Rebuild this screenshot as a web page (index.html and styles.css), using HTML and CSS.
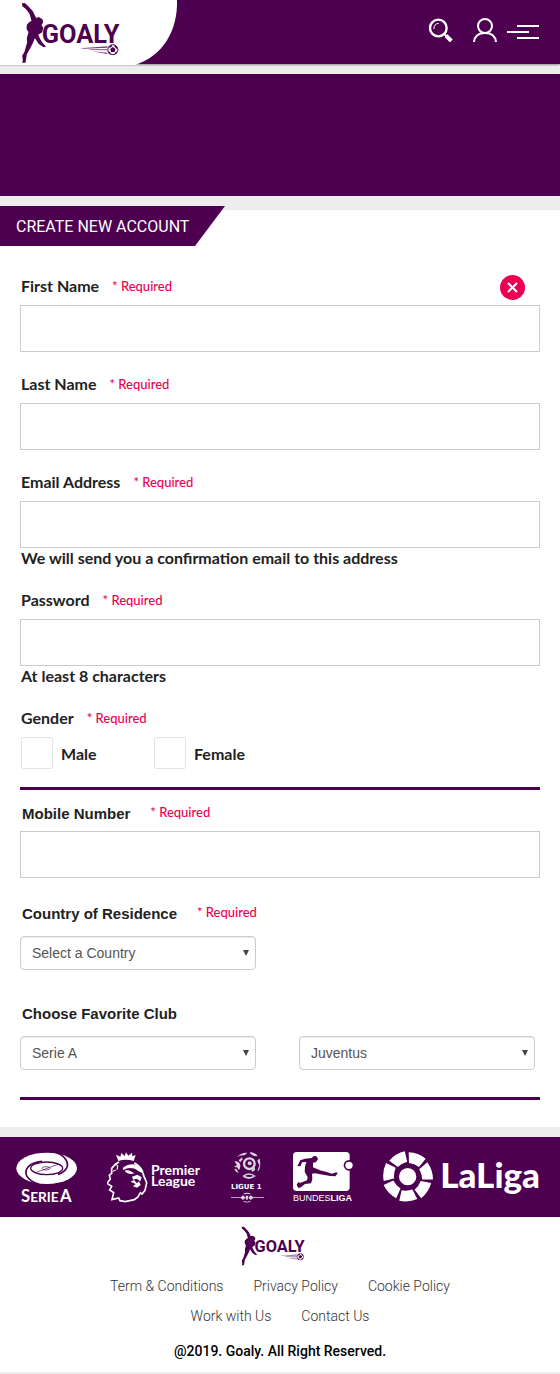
FILE: index.html
```html
<!DOCTYPE html>
<html lang="en">
<head>
<meta charset="utf-8">
<meta name="viewport" content="width=device-width, initial-scale=1">
<title>Goaly – Create new account</title>
<link rel="stylesheet" href="styles.css">
</head>
<body>
<svg class="sprite" aria-hidden="true">
  <symbol id="goaly" viewBox="63 5 305 186">
    <path d="M66 8L75 9L86 19L98 33L108 53L116 50L127 57L129 66L124 74L129 82L126 96L114 103L120 116L127 127L138 139L129 140L115 130L104 113L100 124L91 142L80 162L76 187L66 187L68 180L66 166L73 154L81 126L80 113L85 96L79 85L80 73L87 66L94 61L88 40L77 26L66 17Z"/>
    <text class="wordmark" x="125" y="127">GOALY</text>
    <path d="M240 144L322 138V142L252 145ZM262 147H322V150L275 149ZM275 153L322 157V161L300 157Z" opacity=".75"/>
    <circle cx="338" cy="148" r="15" fill="#fff" stroke="currentColor" stroke-width="3"/>
    <path d="M338 140L346 146L343 155H333L330 146ZM326 139L333 134L337 137L329 143ZM343 134L351 140L350 146L343 139ZM324 153L330 156L332 163L325 159ZM346 156L352 153L349 160L342 163Z"/>
  </symbol>
</svg>

<header class="topbar">
  <a class="brand" href="#" aria-label="Goaly home">
    <svg class="brand-shape" viewBox="0 0 178 65" aria-hidden="true"><path d="M0 0H177C178 30 163 56 135 65H0Z" fill="#fff"/></svg>
    <svg class="brand-logo" aria-hidden="true"><use href="#goaly"/></svg>
  </a>
  <nav class="tools" aria-label="Main">
    <button class="tool" type="button" aria-label="Search">
      <svg width="24" height="24" viewBox="0 0 72 72" fill="none" stroke="#fff"><circle cx="28" cy="30" r="25" stroke-width="7"/><path d="M15 33C14 23 20 16 29 16" stroke-width="3"/><path d="M46 48L52 54" stroke-width="6"/><path d="M51 53L67 69" stroke-width="12"/></svg>
    </button>
    <button class="tool" type="button" aria-label="Account">
      <svg width="24" height="24" viewBox="0 0 72 72" fill="none" stroke="#fff" stroke-width="6"><circle cx="36" cy="24" r="21"/><path d="M3 72C5 53 18 45 36 45S67 53 69 72"/></svg>
    </button>
    <button class="tool" type="button" aria-label="Menu">
      <svg width="32" height="24" viewBox="0 0 96 72" fill="#fff"><path d="M30 21H96V27H30ZM0 39H66V45H0ZM30 57H96V63H30Z"/></svg>
    </button>
  </nav>
</header>

<div class="banner"></div>

<main class="panel">
  <h1 class="tab">CREATE NEW ACCOUNT</h1>
  <form class="form">
    <section class="group">
      <div class="field">
        <div class="caption">
          <label for="first">First Name</label><span class="required">* Required</span>
          <button class="clear" type="button" aria-label="Clear first name">
            <svg width="11" height="11" viewBox="0 0 11 11" stroke="#fff" stroke-width="2"><path d="M1 1L10 10M10 1L1 10"/></svg>
          </button>
        </div>
        <input class="box" id="first" type="text">
      </div>
      <div class="field">
        <div class="caption"><label for="last">Last Name</label><span class="required">* Required</span></div>
        <input class="box" id="last" type="text">
      </div>
      <div class="field">
        <div class="caption"><label for="email">Email Address</label><span class="required">* Required</span></div>
        <input class="box" id="email" type="email" aria-describedby="email-hint">
        <p class="hint" id="email-hint">We will send you a confirmation email to this address</p>
      </div>
      <div class="field">
        <div class="caption"><label for="password">Password</label><span class="required">* Required</span></div>
        <input class="box" id="password" type="password" aria-describedby="password-hint">
        <p class="hint" id="password-hint">At least 8 characters</p>
      </div>
      <div class="field" role="group" aria-labelledby="gender">
        <div class="caption"><span id="gender">Gender</span><span class="required">* Required</span></div>
        <div class="choices">
          <label class="choice"><input type="checkbox" name="male">Male</label>
          <label class="choice"><input type="checkbox" name="female">Female</label>
        </div>
      </div>
    </section>

    <section class="group details">
      <div class="field">
        <div class="caption"><label for="mobile">Mobile Number</label><span class="required">* Required</span></div>
        <input class="box" id="mobile" type="tel">
      </div>
      <div class="field picker">
        <div class="caption"><label for="country">Country of Residence</label><span class="required">* Required</span></div>
        <div class="selects"><select id="country"><option>Select a Country</option></select></div>
      </div>
      <div class="field picker">
        <div class="caption"><label for="league">Choose Favorite Club</label></div>
        <div class="selects">
          <select id="league"><option>Serie A</option></select>
          <select id="club" aria-label="Club"><option>Juventus</option></select>
        </div>
      </div>
    </section>
  </form>
</main>

<section class="leagues" aria-label="Leagues">
  <svg width="61" height="80" viewBox="48 51 183 240" fill="#fff">
    <ellipse cx="140" cy="145" rx="91" ry="47"/>
    <g fill="none" stroke="#4d0050">
      <ellipse cx="140" cy="145" rx="48" ry="19" stroke-width="4"/>
      <path d="M166 97C198 108 213 133 194 152C188 158 181 161 174 163" stroke-width="5"/>
      <path d="M116 192C82 183 67 158 86 139C94 130 108 126 126 124" stroke-width="5"/>
      <ellipse cx="138" cy="145" rx="12" ry="5" stroke-width="2"/>
      <path d="M109 157L174 133M96 151L108 158M170 130L184 139" stroke-width="2"/>
    </g>
    <text class="lato" x="63" y="245" font-size="50">S<tspan font-size="41">ERIE</tspan><tspan font-size="50" dx="4">A</tspan></text>
  </svg>
  <svg width="94" height="80" viewBox="321 51 282 240" fill="#fff">
    <path d="M355 123L348 104L361 110L364 99L374 108L378 97L385 107L396 98L397 109L407 105L401 123Q378 115 355 123Z"/>
    <path d="M403 129C413 135 421 140 426 151L432 169L440 188L435 211L426 222L421 218L414 231L403 239L376 245L360 242L356 234L336 239L341 218L329 210L335 199L321 190L331 177L328 166L335 160L335 145L347 132L357 126" fill="none" stroke="#fff" stroke-width="5"/>
    <path d="M368 144C379 134 393 130 408 134C420 140 427 151 428 160L416 154L405 146C391 142 379 143 371 151ZM374 152C386 148 393 154 403 160C392 164 381 162 374 152ZM396 170L412 164L425 172L421 184L410 176L399 179ZM392 185L402 180L411 190L417 184L422 195L411 203L399 199L407 192Z"/>
    <path d="M350 133Q356 139 351 149M338 154L348 150" stroke="#fff" stroke-width="3"/>
    <text class="lato" font-size="42"><tspan x="453" y="164">Premier</tspan><tspan x="453" y="199">League</tspan></text>
  </svg>
  <svg width="33" height="80" viewBox="63 21 99 240" fill="#ddd3e0">
    <circle cx="118" cy="101" r="16" fill="none" stroke="#ddd3e0" stroke-width="7"/><circle cx="119" cy="100" r="6"/>
    <path d="M80 82Q92 67 112 68L104 76Q89 75 80 82ZM119 66Q137 68 143 79L132 78L122 72ZM73 94Q83 92 90 101Q93 112 87 121L81 112L72 111L81 105ZM72 116L80 118L86 128L79 126ZM148 85Q154 104 147 121L142 124L148 106L142 92ZM97 138Q117 122 137 138Q127 147 116 147Q105 147 97 138ZM124 120L135 111L135 120L127 126ZM86 91L96 82L98 88L91 97Z"/>
    <path d="M105 138Q117 130 130 138Q118 144 105 138Z" fill="#4d0050"/>
    <text class="dejavu" x="63" y="176" font-size="21" fill="#fff">LIGUE 1</text>
    <path d="M63 202H92L99 196L107 203L99 210L92 204H63ZM162 202H130L122 196L115 203L122 210L130 204H162ZM99 192Q111 185 123 192L119 193Q111 189 103 193ZM99 214Q111 221 123 214L119 213Q111 217 103 213ZM107 197H115L113 209H108Z"/>
  </svg>
  <svg width="60" height="80" viewBox="249 21 180 240" fill="#fff">
    <rect x="249" y="66" width="170" height="117" rx="11"/>
    <circle cx="417" cy="106" r="16" fill="#4d0050"/><circle cx="417" cy="106" r="11"/>
    <path fill="#4d0050" d="M308 80Q314 76 321 80L324 88L317 97L309 98L309 112L330 121L350 126L365 131L379 127L383 130L376 139L361 138L340 134L315 130L306 131L307 148L303 160L285 162L273 172L265 174L260 164L265 156L270 159L278 156L291 151L293 142L284 125L285 110L289 96L276 97L272 108L262 109L271 91L285 86L306 84Z"/>
    <text class="arial" x="249" y="214" font-size="27">BUNDES<tspan class="bold">LIGA</tspan></text>
  </svg>
  <svg width="161" height="80" viewBox="39 21 483 240" fill="#fff">
    <defs><path id="block" d="M3 -73Q32 -72 54 -54L34 -29Q20 -39 4 -41Z"/></defs>
    <g transform="translate(113 140)">
      <circle r="26"/>
      <use href="#block"/>
      <use href="#block" transform="rotate(51.43)"/>
      <use href="#block" transform="rotate(102.86)"/>
      <use href="#block" transform="rotate(154.29)"/>
      <use href="#block" transform="rotate(205.71)"/>
      <use href="#block" transform="rotate(257.14)"/>
      <use href="#block" transform="rotate(308.57)"/>
    </g>
    <text class="lato heavy" x="211" y="173" font-size="105">LaLiga</text>
  </svg>
</section>

<footer class="footer">
  <a class="footer-brand" href="#" aria-label="Goaly home"><svg class="footer-logo" aria-hidden="true"><use href="#goaly"/></svg></a>
  <nav class="links" aria-label="Footer">
    <a href="#">Term &amp; Conditions</a>
    <a href="#">Privacy Policy</a>
    <a href="#">Cookie Policy</a>
    <a href="#">Work with Us</a>
    <a href="#">Contact Us</a>
  </nav>
  <p class="copyright">@2019. Goaly. All Right Reserved.</p>
</footer>
</body>
</html>
```
FILE: styles.css
```css
:root {
  --plum: #4d0050;
  --pink: #e90052;
  --mist: #ededed;
}

* { box-sizing: border-box; }

body {
  margin: 0;
  background: var(--mist);
  color: #222;
  font-family: Lato, sans-serif;
}

button { padding: 0; border: 0; background: none; cursor: pointer; }

.sprite { position: absolute; width: 0; height: 0; }

.wordmark { font: 700 76px Roboto, sans-serif; }

.topbar {
  display: flex;
  justify-content: space-between;
  height: 64px;
  margin-bottom: 10px;
  background: var(--plum);
  box-shadow: 0 1px 2px rgba(0, 0, 0, .4);
}

.brand { position: relative; width: 178px; color: var(--plum); }
.brand-shape { display: block; width: 178px; height: 65px; }
.brand-logo { position: absolute; left: 21px; top: 2px; width: 102px; height: 62px; fill: currentColor; }

.tools { display: flex; align-items: center; padding: 0 21px 4px 0; }
.tool { display: flex; margin-left: 20px; }
.tool:last-child { margin-left: 10px; }

.banner { height: 122px; margin-bottom: 10px; background: var(--plum); }

.panel {
  padding-bottom: 27px;
  background: linear-gradient(var(--mist) 4px, #fff 4px);
}

.tab {
  width: 225px;
  height: 40px;
  margin: 0;
  padding-left: 16px;
  background: var(--plum);
  clip-path: polygon(0 0, 100% 0, 195px 100%, 0 100%);
  color: #fff;
  font: 400 16px/42px Roboto, sans-serif;
}

.form { padding: 30px 20px 0; }

.group { border-bottom: 3px solid var(--plum); padding-bottom: 18px; }
.field + .field { margin-top: 22px; }

.caption {
  display: flex;
  align-items: center;
  gap: 13px;
  height: 20px;
  margin-bottom: 9px;
  padding-left: 1px;
  font-size: 16px;
  font-weight: 700;
  line-height: 20px;
}

.required { color: var(--pink); font-size: 13px; font-weight: 500; }

.clear {
  display: grid;
  place-items: center;
  width: 25px;
  height: 25px;
  margin: 2px 15px 0 auto;
  border-radius: 50%;
  background: var(--pink);
}

.box {
  display: block;
  width: 100%;
  height: 47px;
  padding: 0 12px;
  border: 1px solid #ccc;
  background: #fff;
  font: 400 15px Lato, sans-serif;
}

.hint { margin: 0; padding-left: 1px; font-size: 16px; font-weight: 700; line-height: 20px; }

.choices { display: flex; padding-left: 1px; }
.choice { display: flex; align-items: center; gap: 8px; width: 133px; font-size: 16px; font-weight: 700; }
.choice input {
  appearance: none;
  width: 32px;
  height: 32px;
  margin: 0;
  border: 1px solid #e4e4e4;
  border-radius: 2px;
  background: #fff;
}

.details { padding: 14px 0 27px; }
.details .caption {
  gap: 20px;
  margin-bottom: 7px;
  padding-left: 2px;
  font-family: "Liberation Sans", Arial, sans-serif;
  font-size: 15px;
}
.details .required { padding-bottom: 4px; font-family: Lato, sans-serif; }
.details .picker .caption { margin-bottom: 12px; }
.details .field + .picker { margin-top: 26px; }
.details .picker + .picker { margin-top: 34px; }

.selects { display: flex; gap: 43px; }
.selects select {
  appearance: none;
  width: 236px;
  min-width: 0;
  height: 34px;
  padding: 0 24px 0 11px;
  border: 1px solid #ccc;
  border-radius: 4px;
  background: #fff url("data:image/svg+xml,%3Csvg xmlns='http://www.w3.org/2000/svg' width='6' height='6'%3E%3Cpath d='M0 0h6L3 6z' fill='%23444'/%3E%3C/svg%3E") no-repeat right 6px center;
  box-shadow: inset 0 1px 1px rgba(0, 0, 0, .08);
  color: #555;
  font: 400 14px "Liberation Sans", Arial, sans-serif;
}

.leagues {
  display: flex;
  justify-content: space-between;
  margin-top: 10px;
  padding: 0 16px;
  background: var(--plum);
}
.lato { font-family: Lato, sans-serif; font-weight: 700; }
.heavy { font-weight: 900; }
.arial { font-family: "Liberation Sans", Arial, sans-serif; }
.dejavu { font-family: "DejaVu Sans", sans-serif; font-weight: 700; }
.bold { font-weight: 700; }

.footer {
  padding: 9px 60px 6px;
  border-bottom: 2px solid var(--mist);
  background: #fff;
  font-family: Roboto, sans-serif;
  font-size: 14px;
  text-align: center;
}
.footer-brand { display: block; padding-right: 12px; color: var(--plum); }
.footer-logo { display: block; width: 66px; height: 40px; margin: 0 auto; fill: currentColor; }
.links { display: flex; flex-wrap: wrap; justify-content: center; column-gap: 30px; margin: 5px 0; line-height: 30px; }
.links a { color: #333; font-weight: 300; text-decoration: none; }
.copyright { margin: 0; color: #000; font-weight: 500; line-height: 30px; }
```
